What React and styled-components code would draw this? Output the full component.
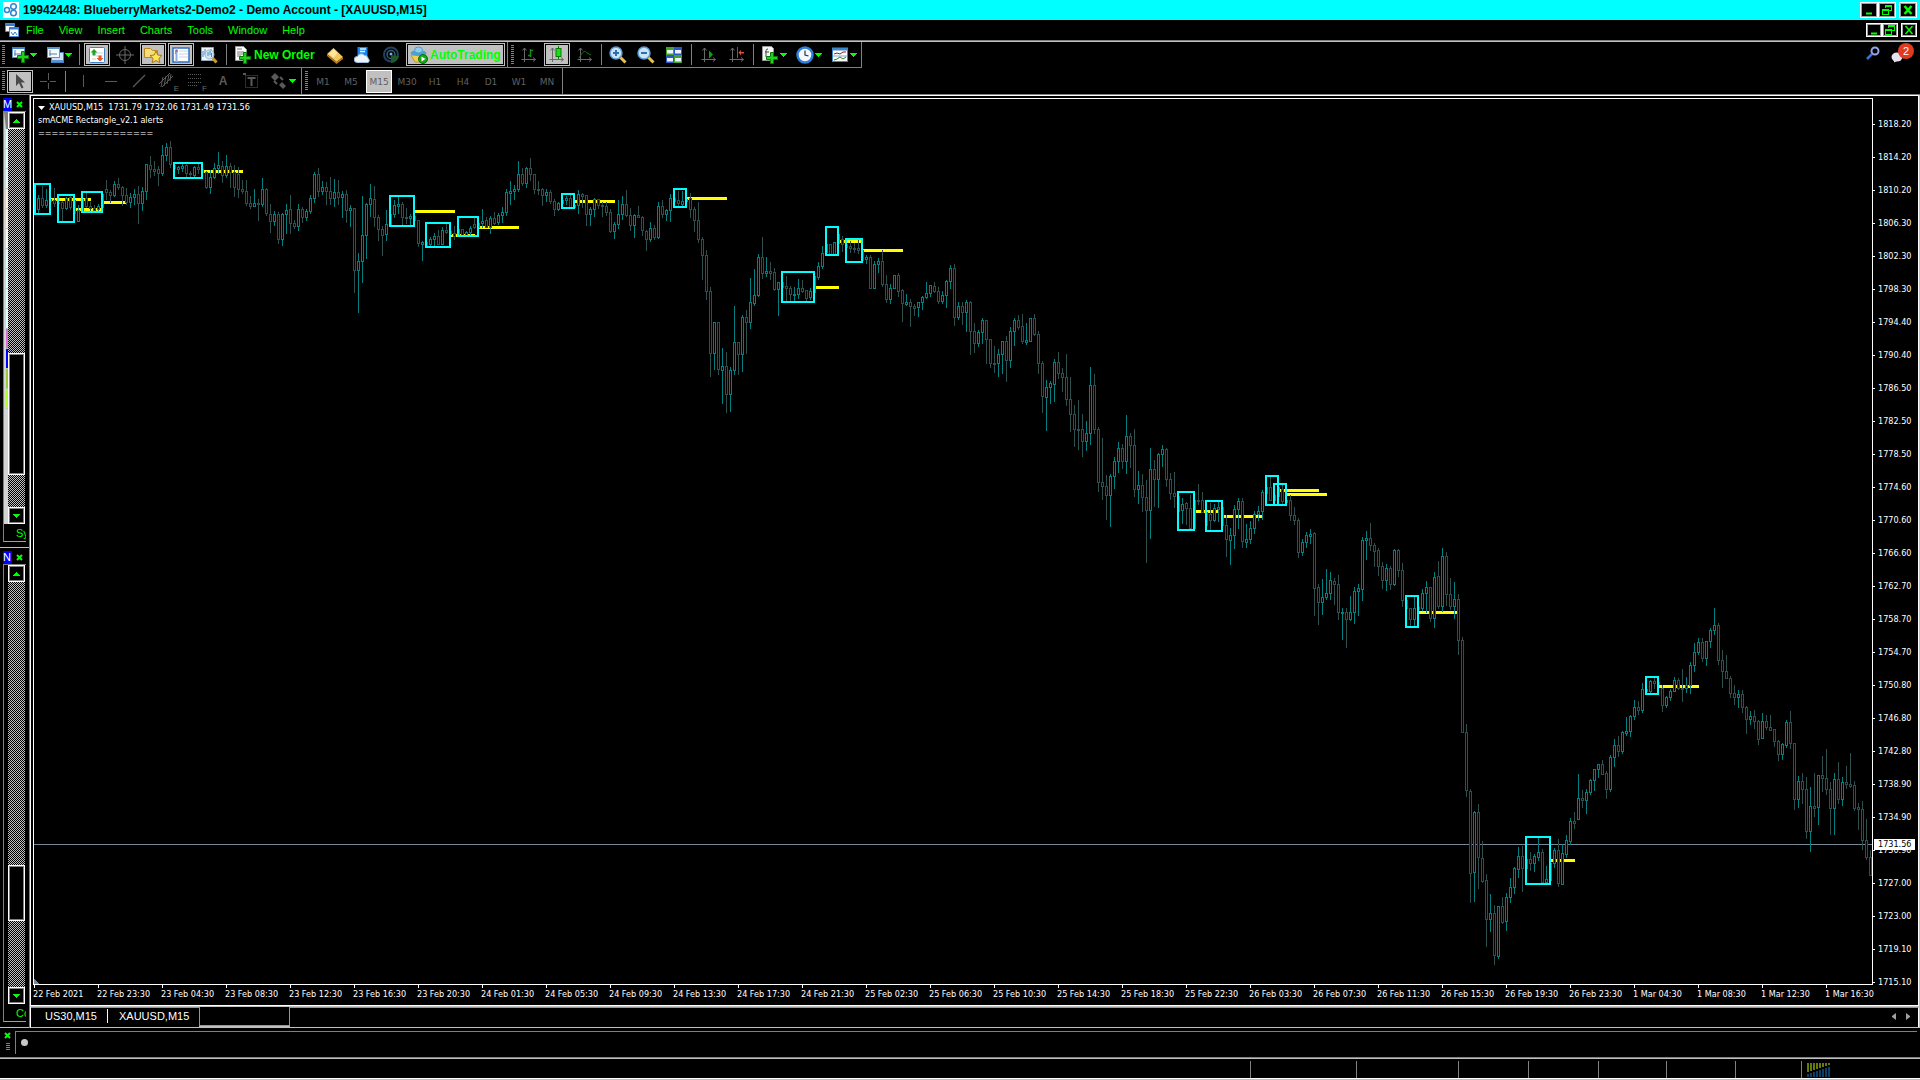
import React, { useState } from 'react';
import styled, { createGlobalStyle, css } from 'styled-components';

const UI_FONT = '"Liberation Sans", Arial, sans-serif';
const CHART_FONT = '"DejaVu Sans Condensed", "DejaVu Sans", Tahoma, sans-serif';

const menus = ['File', 'View', 'Insert', 'Charts', 'Tools', 'Window', 'Help'];
const timeframes = ['M1', 'M5', 'M15', 'M30', 'H1', 'H4', 'D1', 'W1', 'MN'];
const chartTabs = ['US30,M15', 'XAUUSD,M15'];

const prices = [
  '1818.20', '1814.20', '1810.20', '1806.30', '1802.30', '1798.30', '1794.40', '1790.40', '1786.50',
  '1782.50', '1778.50', '1774.60', '1770.60', '1766.60', '1762.70', '1758.70', '1754.70', '1750.80',
  '1746.80', '1742.80', '1738.90', '1734.90', '1730.90', '1727.00', '1723.00', '1719.10', '1715.10',
];

const times = [
  '22 Feb 2021', '22 Feb 23:30', '23 Feb 04:30', '23 Feb 08:30', '23 Feb 12:30', '23 Feb 16:30',
  '23 Feb 20:30', '24 Feb 01:30', '24 Feb 05:30', '24 Feb 09:30', '24 Feb 13:30', '24 Feb 17:30',
  '24 Feb 21:30', '25 Feb 02:30', '25 Feb 06:30', '25 Feb 10:30', '25 Feb 14:30', '25 Feb 18:30',
  '25 Feb 22:30', '26 Feb 03:30', '26 Feb 07:30', '26 Feb 11:30', '26 Feb 15:30', '26 Feb 19:30',
  '26 Feb 23:30', '1 Mar 04:30', '1 Mar 08:30', '1 Mar 12:30', '1 Mar 16:30',
];

const watchRows = [
  '#e0ffff', '#e0ffff', '#e0ffff', '#ffefdc', '#ffefdc', '#f0fff0', '#e0ffff', '#e0ffff', '#e0ffff',
  '#e0ffff', '#da70d6', '#0000ff', '#9acd32', '#adff2f',
];

// one bar per entry: u/d, then high, body top, body bottom, low
const candles = `
d190,190,209,209 u195,198,209,213 d186,198,205,207 u189,200,205,207 d199,199,201,201 d188,200,203,206
d202,202,203,203 d201,202,208,221 u197,198,208,209 d195,197,207,209 d200,200,213,213 u205,210,221,221
u199,199,210,210 d192,198,206,207 d202,206,208,210 d205,208,210,211 u204,206,209,210 u194,194,207,207
d180,189,192,199 d190,192,195,202 u181,184,195,196 d178,184,187,189 d186,187,195,205 d188,195,202,204
u193,197,202,207 u189,194,197,204 d186,194,203,223 u187,191,203,210 u164,164,191,199 d156,165,169,177
d161,169,171,175 d166,169,173,185 u145,155,173,175 u143,147,155,160 d141,147,164,167 d165,165,168,168
u166,167,169,173 u164,166,168,171 d164,165,173,177 d171,173,174,177 u166,167,175,176 d164,167,169,173
d169,169,172,172 d171,172,187,188 u170,177,187,193 u163,168,177,178 u152,165,168,173 d161,166,175,182
u155,166,175,177 d163,166,172,187 d165,172,187,196 d167,174,189,197 d180,189,191,193 d180,191,203,205
d196,203,206,208 u189,203,206,206 d199,203,204,220 u178,189,204,206 d188,189,213,215 d204,214,221,232
u211,214,221,225 d212,214,239,243 u213,214,239,245 u204,210,214,233 d195,209,223,233 d220,223,226,228
u204,209,226,230 d207,209,217,222 u209,211,217,220 u195,198,211,213 u172,174,198,202 d168,174,191,196
u181,187,191,194 d182,187,191,204 d177,191,198,204 u179,192,198,206 d180,192,197,204 u191,194,197,217
d190,194,210,222 u205,208,210,226 d208,208,270,292 u253,261,270,312 u196,235,261,282 u203,204,235,258
u184,198,204,216 d186,199,217,226 d215,217,229,240 d226,229,235,255 u210,224,234,240 u214,214,224,224
u200,205,214,217 u196,204,206,213 d202,204,217,224 d208,217,218,223 u214,216,218,226 d216,216,220,220
d220,220,243,246 u241,242,244,260 d242,242,245,245 u237,239,244,245 u233,236,239,245 d230,236,244,244
u227,230,244,244 d224,230,232,233 d231,231,234,234 d226,233,236,239 u229,229,234,234 d229,229,235,235
u231,232,235,235 u226,228,232,235 d218,224,227,228 u223,223,227,227 u209,221,223,227 d217,220,227,227
u216,218,227,233 d212,218,223,224 u213,215,222,224 u207,212,215,222 u189,192,212,215 u181,191,193,204
u185,189,191,199 u161,174,189,191 d168,174,183,185 u167,168,183,187 d158,168,174,180 d174,174,189,193
d181,189,190,194 d188,189,195,205 u189,192,195,201 d190,192,201,203 d199,201,209,215 u202,203,209,210
u200,200,203,203 u196,198,200,204 d195,198,207,207 u205,205,207,207 u190,194,205,213 d193,194,196,207
d195,195,214,225 u207,209,214,225 u198,199,209,216 d199,199,205,208 d202,205,206,216 d202,206,212,215
d209,212,231,232 u222,224,231,238 u200,214,224,228 u196,204,214,219 d190,204,215,216 d208,215,225,230
u214,215,225,237 d206,215,217,217 d216,217,230,235 d230,231,239,250 u222,228,239,241 d225,228,237,239
u202,206,237,238 d200,206,214,217 u209,210,214,220 u194,198,210,221 d198,198,201,201 d191,200,203,205
u191,201,204,206 u199,199,201,201 d193,198,209,217 d207,209,220,231 d202,220,239,242 d237,239,255,279
d250,255,291,299 d287,291,353,376 u322,322,353,369 d322,322,369,374 u348,366,370,403 d352,366,394,412
u367,370,394,411 u306,342,370,374 d342,342,354,374 u315,317,354,371 d310,317,322,353 u278,302,322,328
u269,295,303,305 u254,257,295,296 d237,257,273,278 u257,271,273,276 d262,271,273,279 d268,272,289,290
u282,282,289,315 d282,282,287,287 d276,286,288,301 d286,288,294,300 u287,294,295,301 u279,288,294,298
d280,288,291,292 d290,290,298,301 u288,291,297,299 u276,276,292,292 u262,266,277,279 u246,253,266,268
u244,244,252,252 d244,244,255,255 u242,242,254,254 u234,234,243,243 d236,239,244,251 d244,244,247,247
d241,246,248,252 d243,248,249,252 d240,248,250,253 d250,250,260,260 u255,257,259,263 d255,257,288,288
u261,264,288,288 u258,261,264,272 d250,261,284,286 d275,284,299,302 u284,288,299,303 u275,275,288,288
d273,275,291,296 d289,290,303,321 u294,302,304,305 d299,302,306,326 d304,306,308,315 u302,302,307,316
u296,297,302,309 u282,293,297,298 u285,285,293,296 d282,286,291,292 d287,291,301,303 u291,295,301,303
u280,281,295,307 u265,268,281,288 d264,268,317,325 u302,306,317,319 d302,306,312,324 u300,302,312,331
d301,302,331,354 d323,331,343,352 u330,332,343,346 u318,320,332,343 d320,320,339,363 d339,339,363,367
d346,363,364,372 u349,354,363,376 u341,341,354,373 d336,341,360,381 u327,331,360,367 u318,320,331,345
d315,320,327,329 d314,326,341,343 u323,340,342,344 u318,318,341,341 d314,318,334,335 d331,334,363,373
d361,363,396,412 u380,387,397,430 u381,383,387,403 u359,362,384,401 d352,362,373,378 d368,373,377,391
d354,377,399,405 d377,399,414,431 d405,414,429,446 d400,429,430,449 d414,429,441,456 u421,433,441,450
u367,385,433,444 d374,385,429,433 d427,429,482,491 d438,482,486,499 d475,486,495,519 u474,476,495,526
u457,461,476,488 u442,448,461,472 d444,448,461,468 u415,436,461,473 d433,436,445,467 d429,445,489,496
u471,485,489,503 d474,485,497,511 d480,497,510,562 u448,469,510,538 d460,469,479,506 u453,454,479,507
u445,449,454,466 d448,449,479,486 d473,479,493,499 d472,493,496,507 d496,496,511,511 u498,504,510,523
d502,503,508,524 d495,508,528,529 u500,500,528,528 d484,500,501,504 d492,500,512,512 d512,512,525,525
d503,514,520,529 u504,508,520,521 u501,507,509,521 d507,507,525,525 d515,525,539,556 u528,535,540,564
u505,509,535,548 u498,501,509,528 d498,501,541,547 u524,539,542,547 u521,528,539,543 u511,514,528,533
u506,511,514,520 u490,492,511,519 u487,487,493,493 d476,487,500,500 u495,495,500,500 u487,487,496,496
d485,489,501,504 u500,500,502,502 d495,500,515,520 d507,515,520,524 d518,520,552,557 u539,542,552,555
u532,535,542,547 u529,534,536,543 d532,533,588,615 d584,587,602,624 u579,597,602,614 u569,593,597,599
u572,580,593,599 d578,581,584,604 d575,584,612,619 u608,612,613,639 d608,612,619,647 u596,612,619,620
u587,591,612,623 u584,588,591,615 u537,540,589,600 u531,538,540,559 d523,538,545,550 d543,545,551,566
d548,550,566,575 d562,566,580,588 u564,568,580,590 d566,568,584,589 u549,550,584,585 d549,550,570,576
d563,570,600,606 d600,600,608,608 d608,608,619,626 u597,608,619,626 d607,607,609,609 u589,593,608,610
u581,587,593,612 d587,587,618,621 u572,577,618,627 d561,576,606,608 u548,556,606,611 d552,556,594,605
d578,594,606,609 u582,599,606,618 d594,599,640,654 d637,640,732,732 d724,732,790,796 d789,791,873,902
u811,812,872,901 d804,812,857,888 d841,858,881,882 d874,880,919,946 u894,913,919,931 d905,913,955,964
u906,906,956,958 d897,906,922,923 u893,897,921,930 u878,887,897,902 u867,868,887,893 u847,856,869,877
d846,856,868,891 u859,859,868,868 d852,859,863,870 u854,856,863,871 u838,852,857,860 d849,852,882,883
u866,879,882,883 u863,863,880,880 u848,850,863,867 d839,850,883,886 u844,853,884,884 u835,840,854,857
u818,821,841,844 d812,821,823,828 u774,798,819,819 d790,798,800,807 u789,792,800,813 u779,780,792,794
u769,769,780,790 u764,764,769,777 d760,764,774,774 d771,773,789,798 u755,757,789,791 u739,745,757,766
d736,745,751,756 u731,732,751,753 u717,731,733,735 u715,716,731,736 u700,707,716,719 d701,707,710,714
u683,689,710,712 u689,689,691,691 u680,681,691,693 d678,681,683,688 d682,682,684,684 d685,688,705,711
u696,697,705,707 u689,691,697,700 u677,680,691,691 d678,680,688,689 d669,688,689,701 u677,685,688,692
u662,665,685,693 u643,652,665,671 u638,642,652,654 d638,642,658,661 u641,641,658,665 u628,630,641,647
u608,625,630,634 d623,625,660,664 d650,660,671,687 d655,671,678,678 d676,678,693,697 d685,693,697,704
u690,694,697,707 d690,694,707,712 d706,707,719,733 u711,716,719,724 d710,716,721,728 d720,721,739,744
u713,721,738,738 d715,721,727,729 d715,727,730,730 d729,729,741,746 d740,741,754,760 u743,744,754,759
u720,722,745,747 d711,722,743,748 d743,743,799,809 u776,781,799,807 d773,781,789,803 d777,789,831,838
u787,806,831,851 d773,806,808,816 u775,775,807,824 d756,775,778,791 d749,778,789,794 d782,789,808,834
u773,779,808,834 d762,779,799,803 u777,782,799,805 d766,782,784,788 d753,784,786,787 d781,785,808,810
d803,807,809,829 d801,809,840,849 d819,840,857,859 d850,857,875,875
`.trim().split(/\s+/).map((bar) => ({
  up: bar[0] === 'u',
  values: bar.slice(1).split(',').map(Number),
}));

// left, top, right, bottom
const zones = [
  [34, 183, 51, 215], [57, 194, 75, 223], [81, 191, 103, 213], [173, 162, 203, 179],
  [389, 195, 415, 227], [425, 222, 451, 248], [457, 216, 479, 237], [561, 193, 575, 209],
  [673, 188, 687, 208], [781, 271, 815, 303], [825, 226, 839, 256], [845, 238, 863, 263],
  [1177, 491, 1195, 531], [1205, 500, 1223, 532], [1265, 475, 1279, 506], [1273, 483, 1287, 506],
  [1405, 595, 1419, 628], [1525, 836, 1551, 885], [1645, 676, 1659, 695],
];

// y, from, to
const levels = [
  [199, 51, 91], [209, 75, 103], [202, 104, 126], [171, 203, 243], [211, 415, 455], [235, 451, 475],
  [227, 479, 519], [201, 575, 615], [198, 687, 727], [287, 815, 839], [241, 839, 863], [250, 863, 903],
  [511, 1195, 1219], [516, 1223, 1263], [490, 1279, 1319], [494, 1287, 1327], [612, 1419, 1459],
  [860, 1551, 1575], [686, 1659, 1699],
];

const statusCells = [106, 102, 70, 70, 68, 69, 66];

/* ---------- icons ---------- */

const Svg = ({ size = 18, children, ...rest }) => (
  <svg width={size} height={size} viewBox="0 0 18 18" fill="none" aria-hidden="true" {...rest}>{children}</svg>
);

const Plus = ({ x = 5, y = 5 }) => (
  <path transform={`translate(${x} ${y})`} d="M4.500 .5h3v4h4v3h-4v4h-3v-4h-4v-3h4z" fill="#1fd01f" stroke="#067a06" />
);

const Axes = () => (
  <path d="M4.500 2v14M1.500 13.500h14M2.500 4.500l2-2.500 2 2.500M13 11.500l2.500 2-2.500 2" stroke="#6a6a6a" />
);

const icons = {
  newChart: <Svg><rect x="1.500" y="1.500" width="12" height="10" fill="#f4faff" stroke="#5b93cc" /><path d="M1 2h13" stroke="#3f7fc4" strokeWidth="2" /><path d="M4 4v6M3 8h8" stroke="#5b7fa8" /><Plus x={6} y={5} /></Svg>,
  profiles: <Svg><rect x="5.500" y="6.500" width="12" height="10" fill="#cfe3f8" stroke="#3f7fc4" /><rect x="1.500" y="1.500" width="12" height="10" fill="#f4faff" stroke="#5b93cc" /><path d="M1 2h13M5 15h12" stroke="#5b93cc" strokeWidth="2" /><path d="M4 4v6M3 8h8" stroke="#5b7fa8" /></Svg>,
  market: <Svg><rect x="1.500" y="1.500" width="15" height="15" rx="1" fill="#fff" stroke="#3f86c8" /><path d="M8 7h7M8 10h7M4 13h4" stroke="#c9cfd6" /><path d="M6 3l3.500 3.500H7.500v3h-3v-3h-2z" fill="#23a323" /><path d="M12 15.500L8.500 12h2V9.500h3V12h2z" fill="#e8542a" /></Svg>,
  dataWindow: <Svg stroke="#6a6a6a"><circle cx="9" cy="9" r="5.500" /><path d="M9 0v18M0 9h18" /></Svg>,
  navigator: <Svg><path d="M.5 2.500h6l2 2h5v7H.5z" fill="#f7dc7a" stroke="#b88a1e" /><path d="M12 5l1.800 4 4.200.5-3.100 2.900.9 4.300-3.800-2.200-3.800 2.200.9-4.300L6 9.500l4.200-.5z" fill="#ffe35a" stroke="#a57612" /></Svg>,
  terminal: <Svg><rect x="1" y="2" width="16" height="14" fill="#fff" stroke="#2f6fbe" strokeWidth="1.500" /><path d="M4.500 2v14" stroke="#86aee0" strokeWidth="2" /><path d="M3 5h3M3 7h1" stroke="#d42222" /><path d="M7 5h9M7 8h9M7 11h9" stroke="#c8d4e6" /></Svg>,
  tester: <Svg><path d="M1.500 1.500h12v13h-12z" fill="#eef5fb" stroke="#8fa5b8" /><path d="M3 5v6M5 3v6M11 3v4" stroke="#3f86c8" /><circle cx="9.500" cy="8.500" r="4.500" fill="#cfe5f6" stroke="#98b4c8" /><path d="M8 6v4M10 5v4M11.500 7v4" stroke="#4b8cc0" /><path d="M12.500 12l4 4.500" stroke="#c99a2a" strokeWidth="3" /></Svg>,
  order: <Svg><path d="M1.500.5h8l3 3v11h-11z" fill="#fff" stroke="#9b9b9b" /><path d="M3 3h5M3 6h7M3 8h7M3 10h4" stroke="#777" /><Plus x={5} y={6} /></Svg>,
  gold: <Svg><path d="M1 8L7.500 2 17 11l-6.500 5z" fill="#f5c658" /><path d="M3 8l4.500-5 4 4-4 5z" fill="#ffe7a0" /><path d="M1 8l9.500 8L17 11v2l-6.500 5L1 10z" fill="#b97c17" /></Svg>,
  web: <Svg><rect x="3.500" y="1" width="10" height="9" fill="#1686ee" /><path d="M6 3h6M6 5.500h5" stroke="#dff1ff" strokeWidth="1.500" /><path d="M3 16.500a3 3 0 01.5-6 4 4 0 017-1 3 3 0 013.500 3 2.200 2.200 0 010 4z" fill="#edf4fb" stroke="#9cb9d6" /></Svg>,
  signal: <Svg><circle cx="9" cy="8.500" r="7" stroke="#24405a" strokeWidth="2" /><circle cx="9" cy="8.500" r="4" stroke="#34607e" strokeWidth="1.500" /><circle cx="9" cy="8" r="1.500" fill="#79a8e8" /><path d="M9 9v8c4 0 7-3 8-7z" fill="#1b5c2a" /></Svg>,
  auto: <Svg><path d="M1 9l4 7h7l4-7z" fill="#f3cc52" stroke="#c99022" /><ellipse cx="8.500" cy="7" rx="8" ry="3" fill="#4da0d2" /><ellipse cx="8.500" cy="4" rx="4" ry="3" fill="#8fcdee" stroke="#4da0d2" /><circle cx="13" cy="13" r="4.500" fill="#17a817" stroke="#0a6f0a" /><path d="M11.500 10.500l4 2.500-4 2.500z" fill="#fff" /></Svg>,
  bars: <Svg><Axes /><path d="M10.500 3v8M8 9.500h2.500M10.500 4.500H13" stroke="#118a11" strokeWidth="1.500" /></Svg>,
  candle: <Svg><Axes /><path d="M10.500 0v13" stroke="#0b7a0b" /><rect x="8" y="2.500" width="5" height="8" fill="#16e016" stroke="#0b7a0b" /></Svg>,
  line: <Svg><Axes /><path d="M3 12C7 5 9 4 11 7l4 2" stroke="#0f7a0f" /></Svg>,
  zoomIn: <Svg><path d="M11 11l5.500 5.500" stroke="#e6c34a" strokeWidth="3" /><circle cx="7" cy="7" r="6" fill="#c8e4fa" stroke="#5c9ad2" strokeWidth="1.500" /><path d="M4 7h6M7 4v6" stroke="#2d6ea8" strokeWidth="2" /></Svg>,
  zoomOut: <Svg><path d="M11 11l5.500 5.500" stroke="#e6c34a" strokeWidth="3" /><circle cx="7" cy="7" r="6" fill="#c8e4fa" stroke="#5c9ad2" strokeWidth="1.500" /><path d="M4 7h6" stroke="#2d6ea8" strokeWidth="2" /></Svg>,
  tile: <Svg><path d="M1 1h8v8H1zM9 9h8v8H9z" fill="#3fa52b" /><path d="M9 1h8v8H9zM1 9h8v8H1z" fill="#2c55c8" /><path d="M2 4h6v3.500H2zM10 4h6v3.500h-6zM2 12h6v3.500H2zM10 12h6v3.500h-6z" fill="#eef4ff" /></Svg>,
  scroll: <Svg><Axes /><path d="M9 4.500l4 4-4 4z" fill="#12a012" /></Svg>,
  shift: <Svg><Axes /><path d="M9.500 1v11" stroke="#2a6db0" /><path d="M10.500 6.500L13 4v2h3v1.500h-3V9.500z" fill="#e0502a" /></Svg>,
  indicators: <Svg><path d="M1.500.5h9l2 2v12h-11z" fill="#f5f5f5" stroke="#9a9a9a" /><path d="M7 3c-2 0-2 1-2 3v5M4 6h4" stroke="#444" /><Plus x={5} y={6} /></Svg>,
  clock: <Svg><circle cx="9" cy="9" r="7.500" fill="#f4f9ff" stroke="#2f7fdc" strokeWidth="2.500" /><path d="M9 4.500V9l3.500 1" stroke="#333" strokeWidth="1.200" /></Svg>,
  template: <Svg><rect x="1.500" y="2.500" width="15" height="13" fill="#fff" stroke="#3f86c8" /><path d="M1 3h16" stroke="#3f86c8" strokeWidth="3" /><path d="M3 8l3-1 3 1 3-2h3" stroke="#9a2020" /><path d="M2 10h14" stroke="#7fa8d0" /><path d="M3 14l3-1 3-2 3 2 3-2" stroke="#1a8a1a" /></Svg>,
  cursor: <Svg><path d="M5 2v12l3-3 2.500 5.500 2-1L10 10.500h4z" fill="#4a4a4a" /></Svg>,
  cross: <Svg stroke="#5a5a5a"><path d="M9.500 1v7M9.500 11v6M1 9.500h7M11 9.500h6" /></Svg>,
  vline: <Svg stroke="#5a5a5a"><path d="M9.500 3v12" /></Svg>,
  hline: <Svg stroke="#5a5a5a"><path d="M3 9.500h12" /></Svg>,
  trend: <Svg stroke="#5a5a5a"><path d="M3 15L15 3" strokeWidth="1.200" /></Svg>,
  channel: <Svg stroke="#5a5a5a"><path d="M1 12L12 1M4 15L15 4M5 5l-2 10M8 4L6 14M11 3L9 12M13 2l-1 7" /></Svg>,
  fibo: <Svg stroke="#5a5a5a"><path d="M2 2.500h14M2 6.500h14M2 10.500h14M2 13.500h9" strokeDasharray="1 1" /></Svg>,
  label: <Svg stroke="#5a5a5a"><rect x="3.500" y="3.500" width="12" height="12" strokeDasharray="1 1" /><path d="M5.500 6h8M9.500 6v8" strokeWidth="2" /><path d="M1 2h3" strokeWidth="2" /></Svg>,
  arrows: <Svg stroke="#5a5a5a"><path d="M1 5l4-4 4 4-4 4zM9 13l3-3 4 4-3 3z" fill="#5a5a5a" stroke="none" /><path d="M4 9l3 3M10 5l3 3" strokeWidth="2" /></Svg>,
};

const Caret = ({ up }) => (
  <svg width="7" height="4" viewBox="0 0 7 4" shapeRendering="crispEdges" aria-hidden="true">
    <path d={up ? 'M0 4h7L4 0H3z' : 'M0 0h7L4 4H3z'} fill="#00ff00" />
  </svg>
);

const Cross = () => (
  <svg width="7" height="7" viewBox="0 0 7 7" aria-hidden="true">
    <path d="M1 1l5 5M6 1L1 6" stroke="#00ff00" strokeWidth="2" />
  </svg>
);

/* ---------- chart drawing ---------- */

function CandleChart() {
  return (
    <Canvas role="img" aria-label="XAUUSD M15 candlestick chart" shapeRendering="crispEdges">
      <g transform="translate(-34 -99)">
        <path d="M34 844.500H4000" stroke="#778899" />
        <path d="M34 979v5h5z" fill="#778899" />
        {levels.map(([y, from, to]) => (
          <path key={`${y}-${from}`} d={`M${from} ${y + 0.5}H${to}`} stroke="#ffff00" strokeWidth="3" />
        ))}
        {candles.map(({ up, values: [high, top, bottom, low] }, i) => {
          const x = 34.5 + i * 4;
          return (
            <g key={i} stroke={up ? '#008080' : '#2f4f4f'}>
              <path d={`M${x} ${high}V${low + 1}`} />
              <rect x={x - 1} y={top + 0.5} width="2" height={Math.max(bottom - top, 0)} fill="#000" />
              {bottom - top < 2 && <path d={`M${x - 1.5} ${top + 0.5}h3`} />}
            </g>
          );
        })}
        {zones.map(([left, top, right, bottom]) => (
          <rect key={left} x={left + 1} y={top + 1} width={right - left - 2} height={bottom - top - 2} stroke="#00ffff" strokeWidth="2" fill="none" />
        ))}
      </g>
    </Canvas>
  );
}

function WindowButtons({ small }) {
  return (
    <ButtonGroup>
      <WindowButton $small={small} aria-label="Minimize">
        <svg width="12" height="12" viewBox="0 0 12 12"><path d="M3 9.500h6" stroke="#0f0" strokeWidth="2" /></svg>
      </WindowButton>
      <WindowButton $small={small} aria-label="Restore">
        <svg width="12" height="12" viewBox="0 0 12 12" fill="none" stroke="#0f0" shapeRendering="crispEdges">
          <path d="M4.500 4V1.500h6v5H8M4 2h7M1.500 5.500h6v5h-6zM1 6h7" />
        </svg>
      </WindowButton>
      <WindowButton $small={small} aria-label="Close">
        <svg width="12" height="12" viewBox="0 0 12 12">
          <path d="M2.500 2l7 8M9.500 2l-7 8" stroke="#0f0" strokeWidth={small ? 1.5 : 2.5} />
        </svg>
      </WindowButton>
    </ButtonGroup>
  );
}

function ToolButton({ icon, label, pressed, mark }) {
  return <Tool $pressed={pressed} aria-label={label}>{icons[icon]}{mark && <Mark>{mark}</Mark>}</Tool>;
}

function SplitButton({ icon, label }) {
  return <Split aria-label={label}>{icons[icon]}<Caret /></Split>;
}

// docks are collapsed to a strip, so only the first letters of their names fit
function DockPanel({ name, title, tab, grow, thumb, rows }) {
  const [before, size, after] = thumb;
  return (
    <Dock $grow={grow} aria-label={name}>
      <DockHeader>
        <DockTitle>{title}</DockTitle>
        <IconButton aria-label={`Close ${name}`}><Cross /></IconButton>
      </DockHeader>
      <DockBody>
        <RowStrip $filled={!!rows}>
          {rows && rows.map((color, i) => <RowColor key={i} $color={color} />)}
        </RowStrip>
        <Scrollbar>
          <ScrollArrow aria-label="Scroll up"><Caret up /></ScrollArrow>
          <Track $grow={before} />
          <Thumb $grow={size} />
          <Track $grow={after} />
          <ScrollArrow aria-label="Scroll down"><Caret /></ScrollArrow>
        </Scrollbar>
      </DockBody>
      <DockTab>{tab}</DockTab>
    </Dock>
  );
}

function App() {
  const [timeframe, setTimeframe] = useState('M15');

  return (
    <Page>
      <GlobalStyle />
      <TitleBar>
        <Logo viewBox="0 0 16 16" aria-hidden="true">
          <path d="M0 0h16v16H0z" fill="#fff" />
          <g fill="none" stroke="#2f86d0" strokeWidth="1.500"><circle cx="4" cy="8" r="2.500" /><circle cx="10.500" cy="4.500" r="2.800" /><circle cx="10.500" cy="11" r="2.800" /></g>
        </Logo>
        <Title>19942448: BlueberryMarkets2-Demo2 - Demo Account - [XAUUSD,M15]</Title>
        <WindowButtons />
      </TitleBar>

      <MenuBar>
        <MenuIcon viewBox="0 0 14 14" aria-hidden="true">
          <path d="M.5.5h9v8h-9z" fill="#fff" stroke="#4b8bd0" /><path d="M4.500 4.500h9v9h-9z" fill="#fff" stroke="#4b8bd0" />
          <path d="M0 2h10M4 5.500h10" stroke="#3b7cc8" strokeWidth="2" /><path d="M6 9l2 3 2-3 2 3" fill="none" stroke="#3b7cc8" />
        </MenuIcon>
        {menus.map((name) => <MenuItem key={name}>{name}</MenuItem>)}
        <WindowButtons small />
      </MenuBar>

      <ToolArea>
        <ToolRows>
          <Toolbar $framed>
            <Grip />
            <SplitButton icon="newChart" label="New chart" />
            <SplitButton icon="profiles" label="Profiles" />
            <Divider />
            <ToolButton icon="market" label="Market Watch" pressed />
            <ToolButton icon="dataWindow" label="Data Window" />
            <ToolButton icon="navigator" label="Navigator" pressed />
            <ToolButton icon="terminal" label="Terminal" pressed />
            <ToolButton icon="tester" label="Strategy Tester" />
            <Divider />
            <TextTool $width={89}>{icons.order}New Order</TextTool>
            <ToolButton icon="gold" label="MetaEditor" />
            <ToolButton icon="web" label="Virtual hosting" />
            <ToolButton icon="signal" label="Signals" />
            <TextTool $width={99} $pressed>{icons.auto}AutoTrading</TextTool>
            <Divider $tight />
            <Grip />
            <ToolButton icon="bars" label="Bar chart" />
            <ToolButton icon="candle" label="Candlesticks" pressed />
            <ToolButton icon="line" label="Line chart" />
            <Divider $slim />
            <ToolButton icon="zoomIn" label="Zoom in" />
            <ToolButton icon="zoomOut" label="Zoom out" />
            <ToolButton icon="tile" label="Tile windows" />
            <Divider />
            <ToolButton icon="scroll" label="Auto scroll" />
            <ToolButton icon="shift" label="Chart shift" />
            <Divider $slim />
            <SplitButton icon="indicators" label="Indicators" />
            <SplitButton icon="clock" label="Periods" />
            <SplitButton icon="template" label="Templates" />
          </Toolbar>
          <Toolbar>
            <Grip />
            <ToolButton icon="cursor" label="Cursor" pressed />
            <ToolButton icon="cross" label="Crosshair" />
            <Divider />
            <ToolButton icon="vline" label="Vertical line" />
            <ToolButton icon="hline" label="Horizontal line" />
            <ToolButton icon="trend" label="Trendline" />
            <ToolButton icon="channel" label="Equidistant channel" mark="E" />
            <ToolButton icon="fibo" label="Fibonacci retracement" mark="F" />
            <TextMark>A</TextMark>
            <ToolButton icon="label" label="Text label" />
            <SplitButton icon="arrows" label="Arrows" />
            <Divider $tight />
            <Grip />
            {timeframes.map((tf) => (
              <Timeframe key={tf} $active={tf === timeframe} onClick={() => setTimeframe(tf)}>{tf}</Timeframe>
            ))}
            <Divider $tight />
          </Toolbar>
        </ToolRows>
        <Actions>
          <IconButton aria-label="Search">
            <svg width="14" height="14" viewBox="0 0 14 14" fill="none"><path d="M6 8l-5 5" stroke="#3a72d8" strokeWidth="2.500" /><circle cx="9" cy="5" r="3.500" stroke="#8fa8e8" strokeWidth="2" /></svg>
          </IconButton>
          <Messages aria-label="Messages">
            <svg width="24" height="20" viewBox="0 0 24 20"><ellipse cx="7" cy="14" rx="5.500" ry="4.500" fill="#e4e4ee" /><path d="M4 17v2.500l4-2z" fill="#e4e4ee" /></svg>
            <Badge>2</Badge>
          </Messages>
        </Actions>
      </ToolArea>

      <Workspace>
        <Sidebar>
          <DockPanel name="Market Watch" title="M" tab="Sy" grow={17} thumb={[226, 120, 33]} rows={watchRows} />
          <DockPanel name="Navigator" title="N" tab="Co" grow={18} thumb={[283, 54, 66]} />
        </Sidebar>
        <ChartArea>
          <ChartWindow>
            <Plot>
              <CandleChart />
              <ChartInfo>
                <p>
                  <svg width="7" height="4" viewBox="0 0 7 4" aria-hidden="true"><path d="M0 0h7L3.500 4z" fill="#fff" /></svg>
                  <span>XAUUSD,M15&nbsp; 1731.79 1732.06 1731.49 1731.56</span>
                </p>
                <p>smACME Rectangle_v2.1 alerts</p>
                <p>=================</p>
              </ChartInfo>
            </Plot>
            <PriceAxis>
              {prices.map((price) => <Price key={price}>{price}</Price>)}
              <CurrentPrice>1731.56</CurrentPrice>
            </PriceAxis>
            <TimeAxis>
              {times.map((time) => <Time key={time}>{time}</Time>)}
            </TimeAxis>
          </ChartWindow>
          <TabBar>
            <TabGroup>
              {chartTabs.map((name) => <ChartTab key={name}>{name}</ChartTab>)}
            </TabGroup>
            <EmptyTab />
            <TabFill>
              <IconButton aria-label="Previous tab"><svg width="4" height="7" viewBox="0 0 4 7"><path d="M4 0v7L0 4V3z" fill="#a0a0a0" /></svg></IconButton>
              <IconButton aria-label="Next tab"><svg width="4" height="7" viewBox="0 0 4 7"><path d="M0 0v7l4-3V3z" fill="#a0a0a0" /></svg></IconButton>
            </TabFill>
          </TabBar>
        </ChartArea>
      </Workspace>

      <TerminalBar>
        <TerminalHandle>
          <IconButton aria-label="Close terminal"><Cross /></IconButton>
          <HandleGrip />
        </TerminalHandle>
        <TerminalBody><Bullet /></TerminalBody>
      </TerminalBar>

      <StatusBar>
        <StatusMain />
        {statusCells.map((width, i) => <StatusCell key={i} $width={width} />)}
        <Connection>
          <svg width="23" height="14" viewBox="0 0 23 14" shapeRendering="crispEdges" aria-hidden="true">
            {[0, 1, 2, 3, 4, 5, 6, 7].map((n) => (
              <g key={n}>
                <path d={`M${n * 3} 0h2v${9 - n}h-2z`} fill="#667a0a" />
                <path d={`M${n * 3} ${11 - n}h2V14h-2z`} fill="#0b3f66" />
              </g>
            ))}
          </svg>
        </Connection>
      </StatusBar>
    </Page>
  );
}

const GlobalStyle = createGlobalStyle`
  * {
    box-sizing: border-box;
  }
  body {
    margin: 0;
    background: #000;
    overflow: hidden;
  }
  p {
    margin: 0;
  }
  button {
    margin: 0;
    padding: 0;
    border: 0;
    background: none;
    color: inherit;
    font: inherit;
  }
  svg {
    display: block;
    flex: none;
  }
`;

const Page = styled.div`
  display: flex;
  flex-direction: column;
  height: 100vh;
  background: #000;
  color: #00ff00;
  font: 11px/14px ${UI_FONT};
`;

const TitleBar = styled.header`
  display: flex;
  align-items: center;
  gap: 4px;
  height: 20px;
  padding: 0 3px;
  background: #00ffff;
  color: #000;
`;

const Logo = styled.svg`
  width: 16px;
  height: 16px;
`;

const Title = styled.h1`
  flex: 1;
  margin: 0;
  font-size: 12px;
  font-weight: 700;
  white-space: nowrap;
`;

const MenuBar = styled.nav`
  display: flex;
  align-items: center;
  height: 20px;
  padding: 0 3px 0 5px;
`;

const MenuIcon = styled.svg`
  width: 14px;
  height: 14px;
`;

const MenuItem = styled.button`
  padding: 0 8px 0 7px;
`;

const ButtonGroup = styled.div`
  display: flex;
  margin-left: auto;
  button:last-child {
    margin-left: 3px;
  }
`;

const WindowButton = styled.button`
  display: flex;
  align-items: center;
  justify-content: center;
  width: ${({ $small }) => ($small ? 16 : 18)}px;
  height: ${({ $small }) => ($small ? 14 : 16)}px;
  border: 1px solid #fff;
  box-shadow: inset 0 0 0 1px #a0a0a0;
  background: #000;
`;

const ToolArea = styled.div`
  display: flex;
  justify-content: space-between;
  align-items: flex-start;
  border-top: 1px solid #808080;
  box-shadow: inset 0 1px 0 #c0c0c0;
  padding-top: 1px;
`;

const ToolRows = styled.div`
  display: flex;
  flex-direction: column;
  align-items: flex-start;
`;

const Toolbar = styled.div`
  display: flex;
  align-items: center;
  height: 26px;
  ${({ $framed }) => $framed && css`
    border-right: 1px solid #808080;
    border-bottom: 1px solid #808080;
  `}
`;

const Grip = styled.span`
  width: 3px;
  height: 20px;
  margin: 0 1px 0 2px;
  background: repeating-linear-gradient(#808080 0 1px, #000 1px 2px);
`;

const Divider = styled.span`
  width: 1px;
  height: ${({ $tight }) => ($tight ? 26 : 21)}px;
  margin: 0 ${({ $tight, $slim }) => ($tight ? 1 : $slim ? 2 : 3)}px;
  background: #808080;
`;

const pressedLook = css`
  border: 1px solid #c0c0c0;
  box-shadow: inset 0 0 0 1px #000;
  background: #c0c0c0;
`;

const Tool = styled.button`
  position: relative;
  display: flex;
  align-items: center;
  justify-content: center;
  width: 26px;
  height: 23px;
  margin: 0 1px;
  ${({ $pressed }) => $pressed && pressedLook}
`;

const Mark = styled.span`
  position: absolute;
  right: 1px;
  bottom: 0;
  color: #6a6a6a;
  font-size: 8px;
  line-height: 9px;
`;

const TextMark = styled.button`
  width: 28px;
  color: #5a5a5a;
  font-size: 12px;
  font-weight: 700;
`;

const Split = styled.button`
  display: flex;
  align-items: center;
  justify-content: flex-end;
  gap: 1px;
  width: 35px;
  padding-right: 4px;
`;

const TextTool = styled.button`
  display: flex;
  align-items: center;
  gap: 2px;
  width: ${({ $width }) => $width}px;
  height: 23px;
  margin: 0 1px;
  padding-left: 3px;
  font-size: 12px;
  font-weight: 700;
  white-space: nowrap;
  ${({ $pressed }) => $pressed && pressedLook}
`;

const Timeframe = styled.button`
  width: ${({ $active }) => ($active ? 26 : 28)}px;
  height: 23px;
  margin: 0 ${({ $active }) => ($active ? 1 : 0)}px;
  padding-top: 2px;
  border: ${({ $active }) => ($active ? '1px solid #fff' : '0')};
  background: ${({ $active }) => ($active ? '#c0c0c0' : 'none')};
  color: #606060;
  font-family: "DejaVu Sans", sans-serif;
  font-size: 9px;
`;

const Actions = styled.div`
  display: flex;
  align-items: center;
  gap: 10px;
  padding: 1px 6px 0 0;
`;

const IconButton = styled.button`
  display: flex;
  align-items: center;
  justify-content: center;
`;

const Messages = styled(IconButton)`
  position: relative;
`;

const Badge = styled.span`
  position: absolute;
  top: 0;
  right: 0;
  width: 16px;
  height: 16px;
  border-radius: 8px;
  background: #e03a20;
  color: #fff;
  line-height: 16px;
  text-align: center;
`;

const Workspace = styled.main`
  display: flex;
  flex: 1;
  min-height: 0;
  border-top: 1px solid #808080;
`;

const Sidebar = styled.aside`
  display: flex;
  flex-direction: column;
  width: 30px;
  border-right: 1px solid #808080;
`;

const Dock = styled.section`
  display: flex;
  flex-direction: column;
  flex: ${({ $grow }) => $grow} 1 0;
  min-height: 0;
  padding: 2px 3px 5px;
  border-bottom: 1px solid #c0c0c0;
`;

const DockHeader = styled.div`
  display: flex;
  align-items: center;
  gap: 4px;
  height: 15px;
  border-bottom: 1px solid #808080;
`;

const DockTitle = styled.h2`
  width: 9px;
  height: 13px;
  margin: 0;
  background: #0000ff;
  color: #fff;
  font-size: 11px;
  font-weight: 400;
  line-height: 13px;
`;

const DockBody = styled.div`
  display: flex;
  flex: 1;
  min-height: 0;
  border-left: 1px solid #808080;
`;

const RowStrip = styled.div`
  width: 4px;
  overflow: hidden;
  ${({ $filled }) => $filled && css`
    border-top: 17px solid #808080;
    border-left: 2px solid #d3d3d3;
    background: #d3d3d3;
  `}
`;

const RowColor = styled.div`
  height: 20px;
  border-bottom: 1px solid #c0c0c0;
  background: ${({ $color }) => $color};
`;

const Scrollbar = styled.div`
  display: flex;
  flex-direction: column;
  width: 17px;
`;

const ScrollArrow = styled.button`
  display: flex;
  align-items: center;
  justify-content: center;
  height: 17px;
  border: 1px solid #fff;
  box-shadow: inset 0 0 0 1px #808080;
`;

const Track = styled.div`
  flex: ${({ $grow }) => $grow} 1 0;
  background: repeating-conic-gradient(#c0c0c0 0 25%, #000 0 50%) 0 0 / 2px 2px;
`;

const Thumb = styled.div`
  flex: ${({ $grow }) => $grow} 1 0;
  border: 1px solid #fff;
  box-shadow: inset 0 0 0 1px #808080;
`;

const DockTab = styled.button`
  height: 18px;
  padding-left: 12px;
  overflow: hidden;
  border-left: 1px solid #808080;
  border-bottom: 1px solid #a0a0a0;
  text-align: left;
`;

const ChartArea = styled.div`
  display: flex;
  flex-direction: column;
  flex: 1;
  min-width: 0;
  border-right: 1px solid #c0c0c0;
`;

const ChartWindow = styled.div`
  display: grid;
  grid-template: minmax(0, 1fr) 20px / minmax(0, 1fr) 45px;
  flex: 1;
  min-height: 0;
  padding: 2px 0 0 2px;
  border: 1px solid #fff;
  color: #fff;
  font: 9px/13px ${CHART_FONT};
`;

const Plot = styled.div`
  position: relative;
  min-height: 0;
  border: 1px solid #fff;
`;

const Canvas = styled.svg`
  width: 100%;
  height: 100%;
`;

const ChartInfo = styled.div`
  position: absolute;
  top: 2px;
  left: 4px;
  p {
    display: flex;
    align-items: center;
    gap: 4px;
    white-space: pre;
  }
`;

const PriceAxis = styled.div`
  position: relative;
  padding-top: 9px;
  overflow: hidden;
`;

const Price = styled.div`
  display: flex;
  align-items: center;
  gap: 3px;
  height: 33px;
  padding-top: 1px;
  &::before {
    content: '';
    width: 2px;
    height: 1px;
    background: #fff;
  }
`;

const CurrentPrice = styled.span`
  position: absolute;
  top: 741px;
  left: 1px;
  width: 41px;
  height: 11px;
  padding-left: 4px;
  background: #fff;
  color: #000;
  line-height: 11px;
`;

const TimeAxis = styled.div`
  display: flex;
  grid-column: 1 / -1;
  overflow: hidden;
`;

const Time = styled.span`
  flex: 0 0 64px;
  white-space: nowrap;
  &::before {
    content: '';
    display: block;
    width: 1px;
    height: 3px;
    margin-left: 1px;
    background: #fff;
  }
`;

const TabBar = styled.div`
  display: flex;
  height: 22px;
  border-top: 1px solid #c0c0c0;
  border-bottom: 1px solid #c0c0c0;
  border-left: 1px solid #fff;
  color: #fff;
`;

const TabGroup = styled.div`
  display: flex;
  align-items: flex-start;
  width: 168px;
  padding: 1px 0 0 3px;
  border-top: 1px solid #00ff00;
`;

const ChartTab = styled.button`
  height: 14px;
  padding: 0 10px 0 11px;
  white-space: nowrap;
  & + & {
    border-left: 1px solid #fff;
  }
`;

const EmptyTab = styled.div`
  width: 91px;
  height: 19px;
  border: 1px solid #00ff00;
  border-top: 0;
  box-shadow: 0 1px 0 #c0c0c0;
`;

const TabFill = styled.div`
  display: flex;
  flex: 1;
  align-items: flex-start;
  justify-content: flex-end;
  gap: 10px;
  padding: 5px 8px 0 0;
  border-top: 1px solid #00ff00;
  border-right: 1px solid #fff;
`;

const TerminalBar = styled.section`
  display: flex;
  height: 29px;
  padding: 3px 3px 3px 0;
`;

const TerminalHandle = styled.div`
  display: flex;
  flex-direction: column;
  align-items: center;
  gap: 4px;
  width: 15px;
  padding-top: 1px;
`;

const HandleGrip = styled.span`
  width: 4px;
  height: 8px;
  background: repeating-linear-gradient(#808080 0 1px, #000 1px 2px);
`;

const TerminalBody = styled.div`
  flex: 1;
  padding: 7px 5px;
  border-top: 1px solid #808080;
  border-left: 1px solid #808080;
`;

const Bullet = styled.div`
  width: 7px;
  height: 7px;
  border-radius: 4px;
  background: #c8c8c8;
`;

const StatusBar = styled.footer`
  display: flex;
  height: 23px;
  padding-top: 2px;
  border-top: 1px solid #808080;
  border-bottom: 1px solid #c0c0c0;
  box-shadow: inset 0 1px 0 #c0c0c0, inset 0 -1px 0 #fff;
`;

const StatusMain = styled.div`
  flex: 1;
`;

const StatusCell = styled.div`
  width: ${({ $width }) => $width}px;
  height: 17px;
  margin-top: 1px;
  border-left: 1px solid #808080;
`;

const Connection = styled(StatusCell)`
  width: 119px;
  padding: 2px 5px;
`;

export default App;
